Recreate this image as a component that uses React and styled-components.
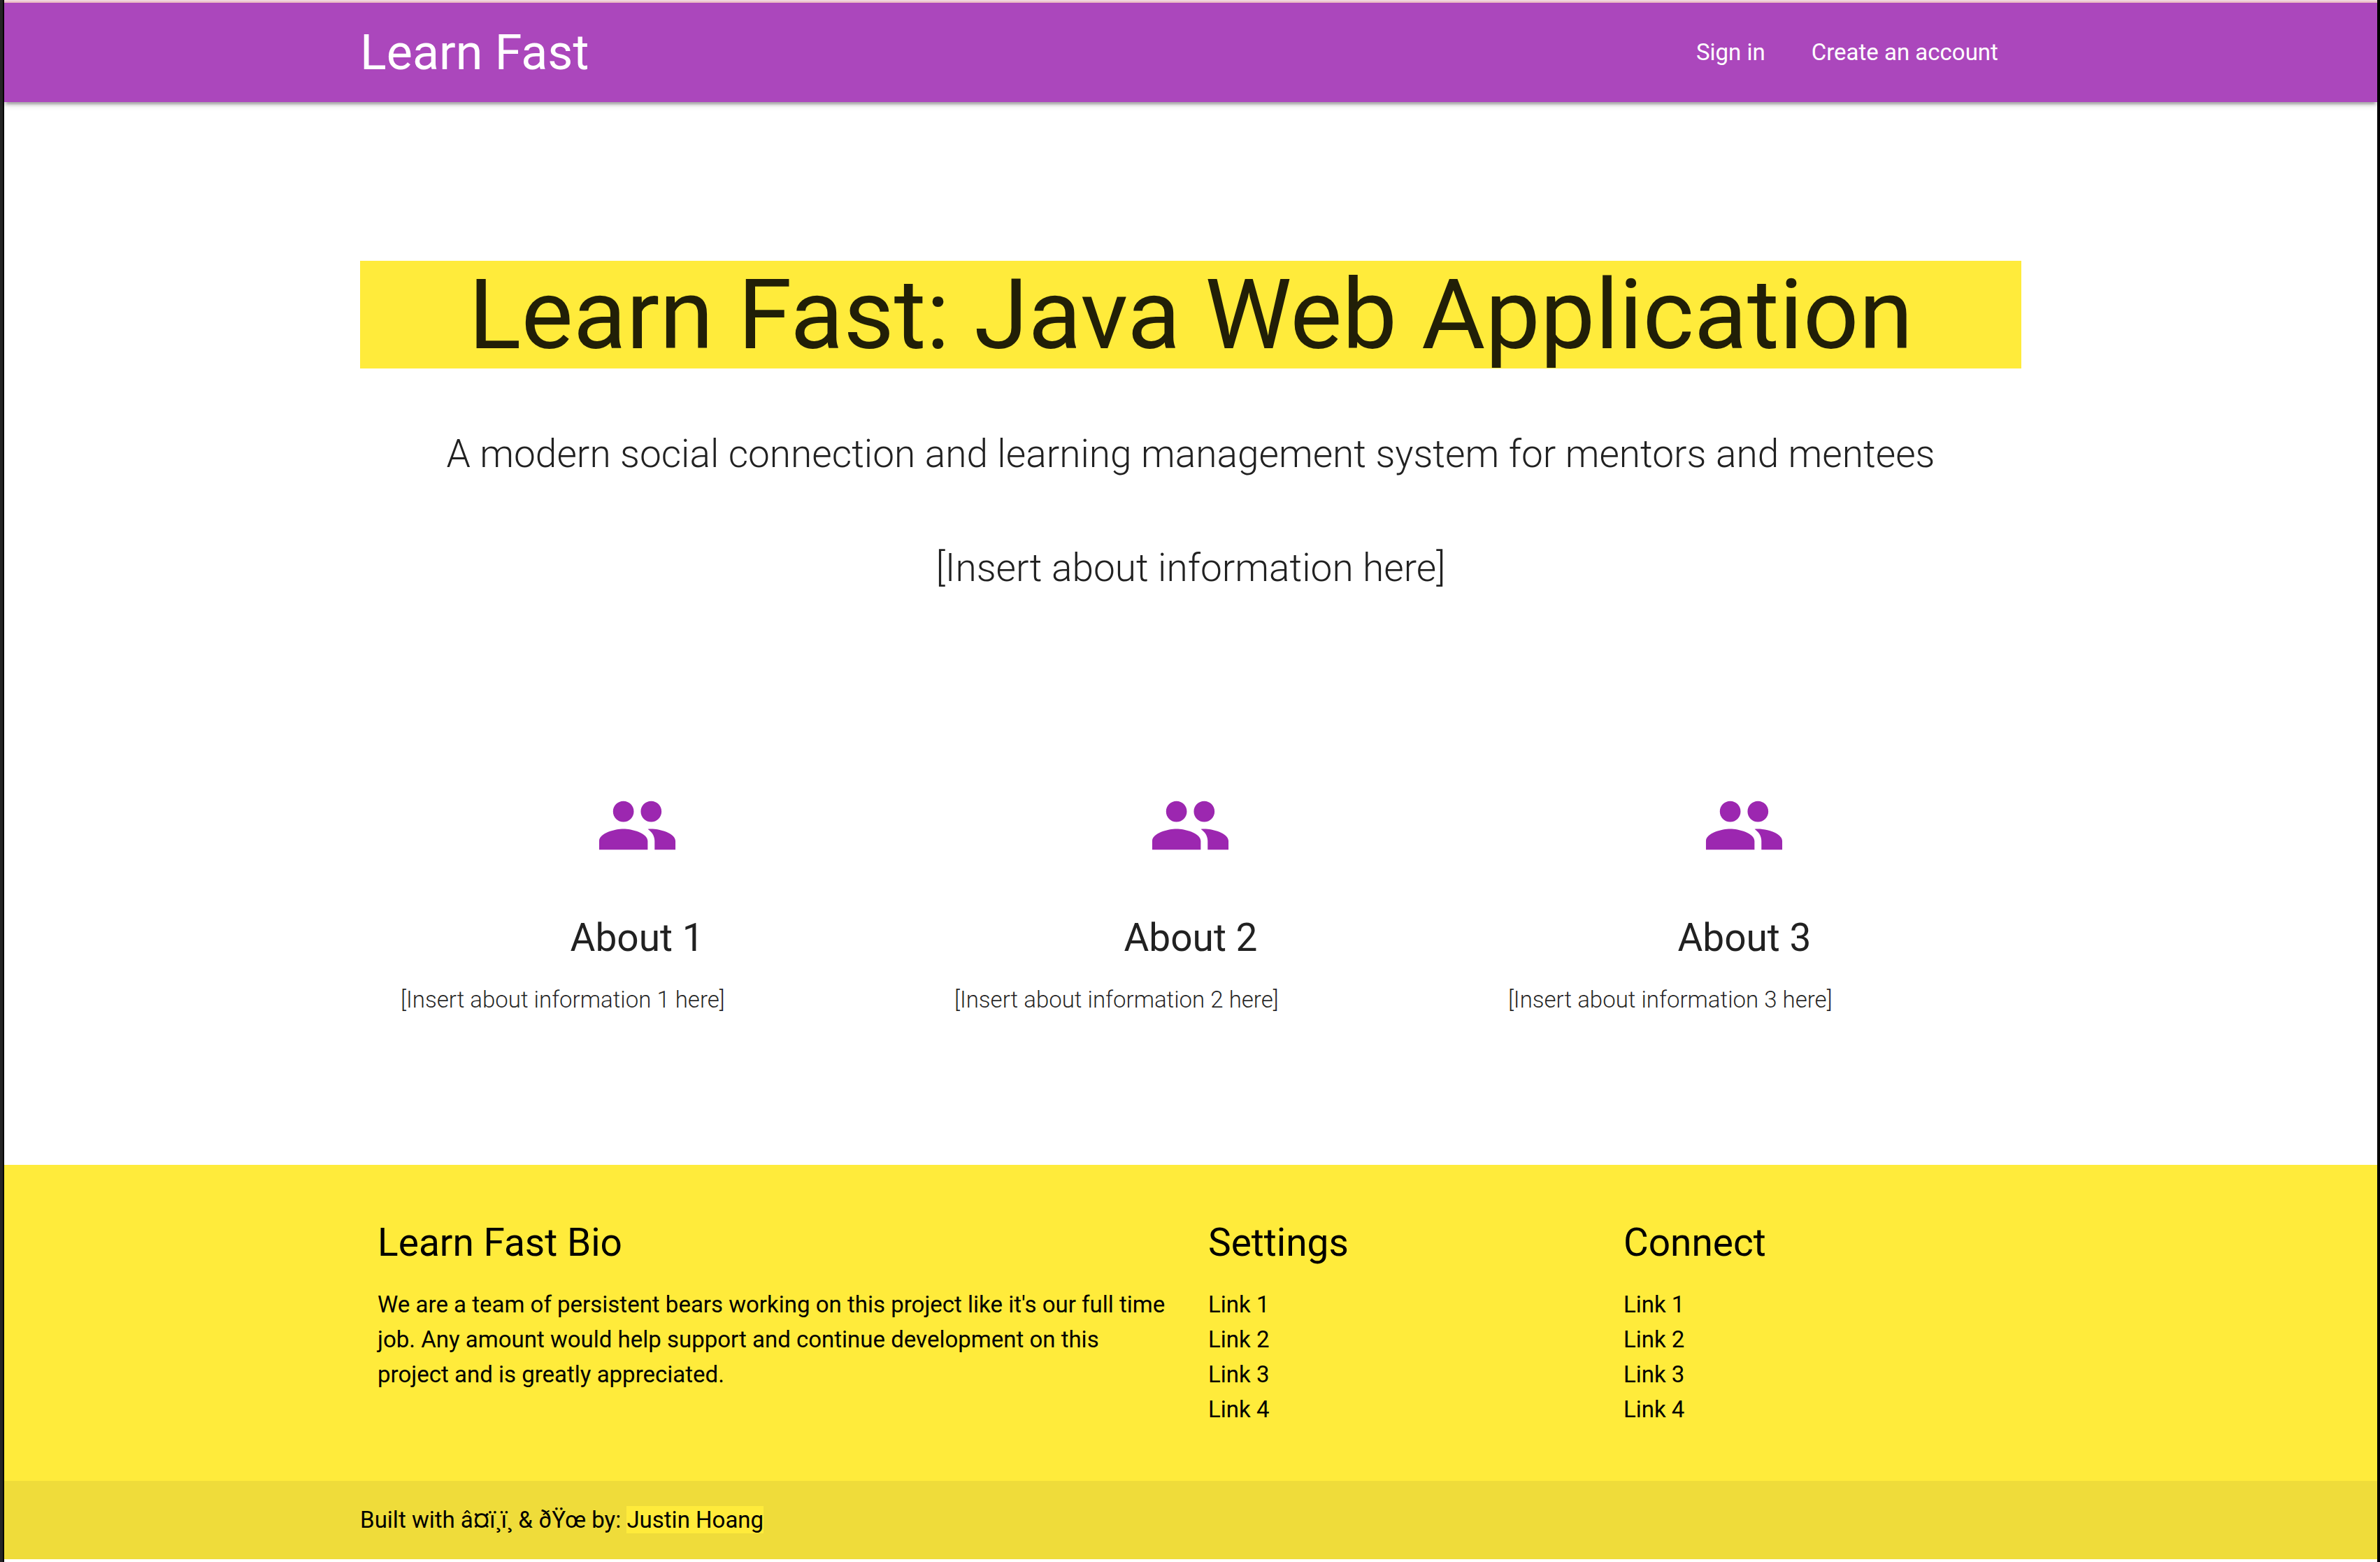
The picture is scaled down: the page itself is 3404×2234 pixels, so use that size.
import React from "react";
import styled, { createGlobalStyle } from "styled-components";

const colors = {
  purple: "#ab47bc",
  purpleDark: "#9c27b0",
  yellow: "#ffeb3b",
  text: "rgba(0, 0, 0, 0.87)",
};

const GlobalStyle = createGlobalStyle`
  *, *::before, *::after { box-sizing: border-box; }
  body {
    margin: 0;
    background: #fff;
    color: ${colors.text};
    font: 400 33px/50px Roboto, "Liberation Sans", sans-serif;
  }
  h1, h2, p, ul { margin: 0; padding: 0; font-weight: 400; }
  ul { list-style: none; }
  a { color: inherit; text-decoration: none; }
`;

const Frame = styled.div`
  min-height: 100vh;
  border-left: 4px solid #242424;
  border-right: 4px solid #000;
`;

const Page = styled.div`
  border-left: 2px solid #000;
  padding-bottom: 4px;
  overflow-x: clip;
`;

const TopStrip = styled.div`
  position: relative;
  z-index: 1;
  height: 4px;
  background: #f0d5dc;
  border-bottom: 2px solid #ebbac3;
`;

const Container = styled.div`
  width: 70%;
  margin: 0 auto;
`;

const NavBar = styled.nav`
  background: ${colors.purple};
  color: #fff;
  box-shadow: 0 4px 4px 0 rgba(0, 0, 0, 0.14), 0 7px 2px -4px rgba(0, 0, 0, 0.12),
    0 2px 11px 0 rgba(0, 0, 0, 0.2);
`;

const NavInner = styled(Container)`
  display: flex;
  align-items: center;
  justify-content: space-between;
  height: 142px;
`;

const Brand = styled.a`
  font-size: 70px;
  line-height: 142px;
`;

const NavLinks = styled.ul`
  display: flex;
`;

const NavLink = styled.a`
  display: block;
  padding: 0 33px;
  line-height: 142px;
`;

const Hero = styled(Container)`
  padding-top: 227px;
  text-align: center;
`;

const Title = styled.h1`
  margin-bottom: 92px;
  background: ${colors.yellow};
  font-size: 140px;
  line-height: 154px;
`;

const Lead = styled.p`
  font-size: 55px;
  font-weight: 300;
  line-height: 60px;

  & + & {
    margin-top: 103px;
  }
`;

const Features = styled(Container)`
  display: grid;
  grid-template-columns: repeat(3, 1fr);
  padding: 279px 0 211px;
`;

const Feature = styled.section`
  padding: 0 58px;
`;

const FeatureIcon = styled.svg`
  display: block;
  width: 119px;
  height: 119px;
  margin: 0 auto 71px;
  fill: ${colors.purpleDark};
`;

const Heading = styled.h2`
  margin-bottom: 34px;
  font-size: 55px;
  line-height: 60px;
  text-align: ${(p) => (p.$centered ? "center" : "left")};
`;

const FeatureText = styled.p`
  font-weight: 300;
`;

const PageFooter = styled.footer`
  background: ${colors.yellow};
  color: #000;
`;

const FooterGrid = styled(Container)`
  display: grid;
  grid-template-columns: 2fr 1fr 1fr;
  padding: 81px 0 77px;
`;

const FooterColumn = styled.div`
  padding: 0 25px;
`;

const Copyright = styled.div`
  padding: 31px 0;
  background: rgba(51, 51, 51, 0.08);
`;

const AuthorLink = styled.a`
  background: ${colors.yellow};
`;

function PeopleIcon() {
  return (
    <FeatureIcon viewBox="0 0 24 24" aria-hidden="true">
      <path d="M16 11c1.66 0 2.99-1.34 2.99-3S17.66 5 16 5c-1.66 0-3 1.34-3 3s1.34 3 3 3zm-8 0c1.66 0 2.99-1.34 2.99-3S9.66 5 8 5C6.34 5 5 6.34 5 8s1.34 3 3 3zm0 2c-2.33 0-7 1.17-7 3.5V19h14v-2.5c0-2.33-4.67-3.5-7-3.5zm8 0c-.29 0-.62.02-.97.05 1.16.84 1.97 1.97 1.97 3.45V19h6v-2.5c0-2.33-4.67-3.5-7-3.5z" />
    </FeatureIcon>
  );
}

function LinkColumn({ title }) {
  return (
    <FooterColumn>
      <Heading>{title}</Heading>
      <ul>
        {[1, 2, 3, 4].map((n) => (
          <li key={n}>
            <a href="#">{`Link ${n}`}</a>
          </li>
        ))}
      </ul>
    </FooterColumn>
  );
}

export default function App() {
  return (
    <Frame>
      <GlobalStyle />
      <Page>
        <TopStrip />
        <NavBar>
          <NavInner>
            <Brand href="#">Learn Fast</Brand>
            <NavLinks>
              <li>
                <NavLink href="#">Sign in</NavLink>
              </li>
              <li>
                <NavLink href="#">Create an account</NavLink>
              </li>
            </NavLinks>
          </NavInner>
        </NavBar>
        <main>
          <Hero>
            <Title>Learn Fast: Java Web Application</Title>
            <Lead>
              A modern social connection and learning management system for mentors and mentees
            </Lead>
            <Lead>[Insert about information here]</Lead>
          </Hero>
          <Features>
            {[1, 2, 3].map((n) => (
              <Feature key={n}>
                <PeopleIcon />
                <Heading $centered>{`About ${n}`}</Heading>
                <FeatureText>{`[Insert about information ${n} here]`}</FeatureText>
              </Feature>
            ))}
          </Features>
        </main>
        <PageFooter>
          <FooterGrid>
            <FooterColumn>
              <Heading>Learn Fast Bio</Heading>
              <p>
                We are a team of persistent bears working on this project like it's our full time
                job. Any amount would help support and continue development on this project and is
                greatly appreciated.
              </p>
            </FooterColumn>
            <LinkColumn title="Settings" />
            <LinkColumn title="Connect" />
          </FooterGrid>
          <Copyright>
            <Container>
              Built with â¤ï¸ï¸ & ðŸœ by: <AuthorLink href="#">Justin Hoang</AuthorLink>
            </Container>
          </Copyright>
        </PageFooter>
      </Page>
    </Frame>
  );
}
